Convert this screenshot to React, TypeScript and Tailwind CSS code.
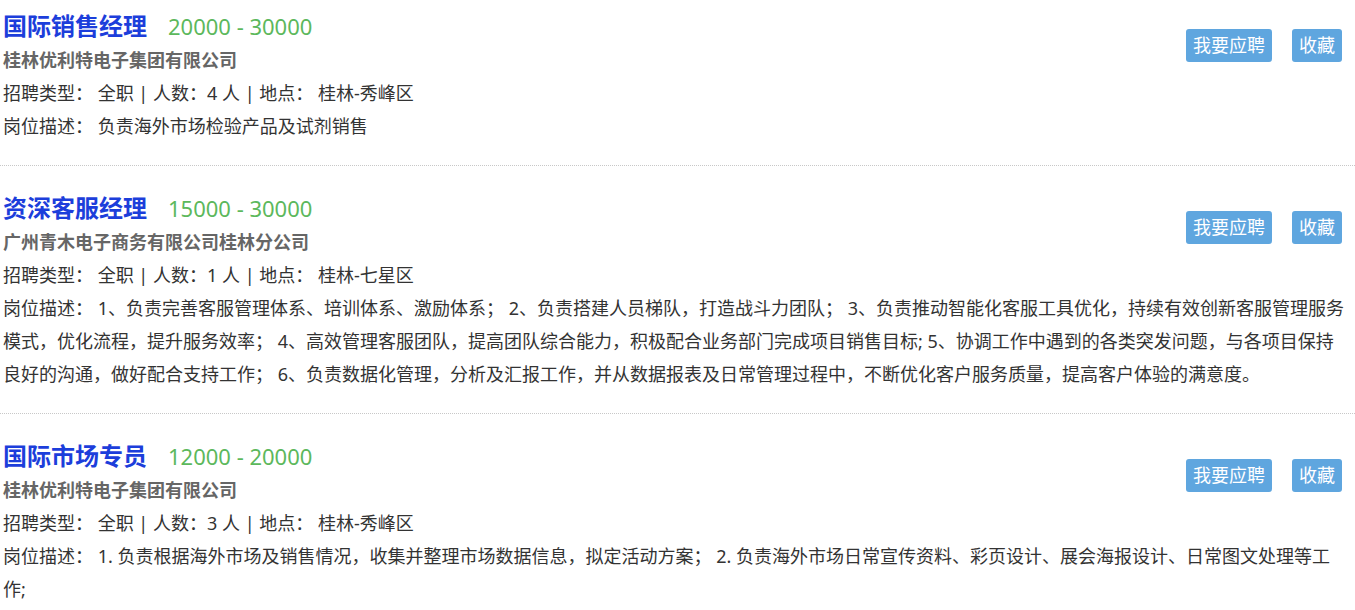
import React from "react";

type Job = {
  title: string;
  salary: string;
  company: string;
  count: string;
  place: string;
  desc: string;
};

const jobs: Job[] = [
  {
    title: "国际销售经理",
    salary: "20000 - 30000",
    company: "桂林优利特电子集团有限公司",
    count: "4",
    place: "桂林-秀峰区",
    desc: "负责海外市场检验产品及试剂销售",
  },
  {
    title: "资深客服经理",
    salary: "15000 - 30000",
    company: "广州青木电子商务有限公司桂林分公司",
    count: "1",
    place: "桂林-七星区",
    desc: "1、负责完善客服管理体系、培训体系、激励体系； 2、负责搭建人员梯队，打造战斗力团队； 3、负责推动智能化客服工具优化，持续有效创新客服管理服务模式，优化流程，提升服务效率； 4、高效管理客服团队，提高团队综合能力，积极配合业务部门完成项目销售目标; 5、协调工作中遇到的各类突发问题，与各项目保持良好的沟通，做好配合支持工作； 6、负责数据化管理，分析及汇报工作，并从数据报表及日常管理过程中，不断优化客户服务质量，提高客户体验的满意度。",
  },
  {
    title: "国际市场专员",
    salary: "12000 - 20000",
    company: "桂林优利特电子集团有限公司",
    count: "3",
    place: "桂林-秀峰区",
    desc: "1. 负责根据海外市场及销售情况，收集并整理市场数据信息，拟定活动方案； 2. 负责海外市场日常宣传资料、彩页设计、展会海报设计、日常图文处理等工作;",
  },
];

export default function App() {
  return (
    <div
      className="w-[1355px] h-[610px] overflow-hidden bg-white text-[#333]"
      style={{ fontFamily: '"Noto Sans", "Noto Sans CJK SC", sans-serif' }}
    >
      {jobs.map((job, i) => (
        <div
          key={i}
          className={
            (i === 0 ? "pt-[8px] " : "pt-[24px] ") +
            "pl-[3px] pr-[7px] pb-[22px] border-b border-dotted border-[#c8c8c8]"
          }
        >
          <div className="float-right mr-[6px] mt-[21px] flex gap-[20px]">
            <span className="h-[33px] px-[7px] rounded-[3px] bg-[#5fa6df] text-white text-[18px] leading-[33px]">
              我要应聘
            </span>
            <span className="h-[33px] px-[7px] rounded-[3px] bg-[#5fa6df] text-white text-[18px] leading-[33px]">
              收藏
            </span>
          </div>
          <div className="h-[36px] leading-[36px] flex items-baseline">
            <span className="text-[24px] font-bold text-[#1c3edb]">{job.title}</span>
            <span className="ml-[21px] text-[22px] text-[#5cb85c]">{job.salary}</span>
          </div>
          <div className="text-[18px] leading-[33px] font-bold text-[#666]">{job.company}</div>
          <div className="text-[18px] leading-[33px]">
            招聘类型： 全职 | 人数：{job.count} 人 | 地点： {job.place}
          </div>
          <div className="text-[18px] leading-[33px]">岗位描述： {job.desc}</div>
        </div>
      ))}
    </div>
  );
}
